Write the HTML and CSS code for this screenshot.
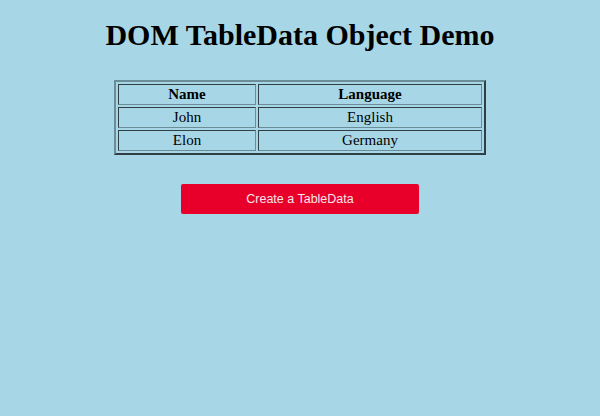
FILE: index.html
```html
<!DOCTYPE html>
<html>
<head>
<meta charset="utf-8">
<title>DOM TableData Object Demo</title>
<link rel="stylesheet" href="styles.css">
</head>
<body class="page">
<h1 class="title">DOM TableData Object Demo</h1>
<table class="data" border="2">
  <tr><th class="col-name">Name</th><th>Language</th></tr>
  <tr><td>John</td><td>English</td></tr>
  <tr><td>Elon</td><td>Germany</td></tr>
</table>
<div class="actions">
  <button class="create">Create a TableData</button>
</div>
</body>
</html>
```

FILE: styles.css
```css
html, body {
  background: #a7d7e6;
}
.page {
  margin: 0;
  padding: 0;
  font-family: "Liberation Serif", "Times New Roman", serif;
  color: #000;
}
.title {
  margin: 0;
  padding-top: 18px;
  text-align: center;
  font-size: 30px;
  line-height: 34px;
  font-weight: bold;
}
.data {
  margin: 28px auto 0;
  width: 372px;
  border-collapse: separate;
  border-spacing: 2px;
  border: 2px outset #6b8d98;
  font-size: 15px;
}
.data th, .data td {
  border: 1px inset #6b8d98;
  padding: 1px;
  height: 17px;
  text-align: center;
  line-height: 17px;
}
.data .col-name {
  width: 134px;
}
.actions {
  display: flex;
  justify-content: center;
  margin-top: 29px;
}
.create {
  width: 238px;
  height: 30px;
  background: #e8002b;
  color: #f8e6ea;
  border: none;
  border-radius: 2px;
  font-family: "Liberation Sans", Arial, sans-serif;
  font-size: 12.5px;
  padding: 0;
}
```
